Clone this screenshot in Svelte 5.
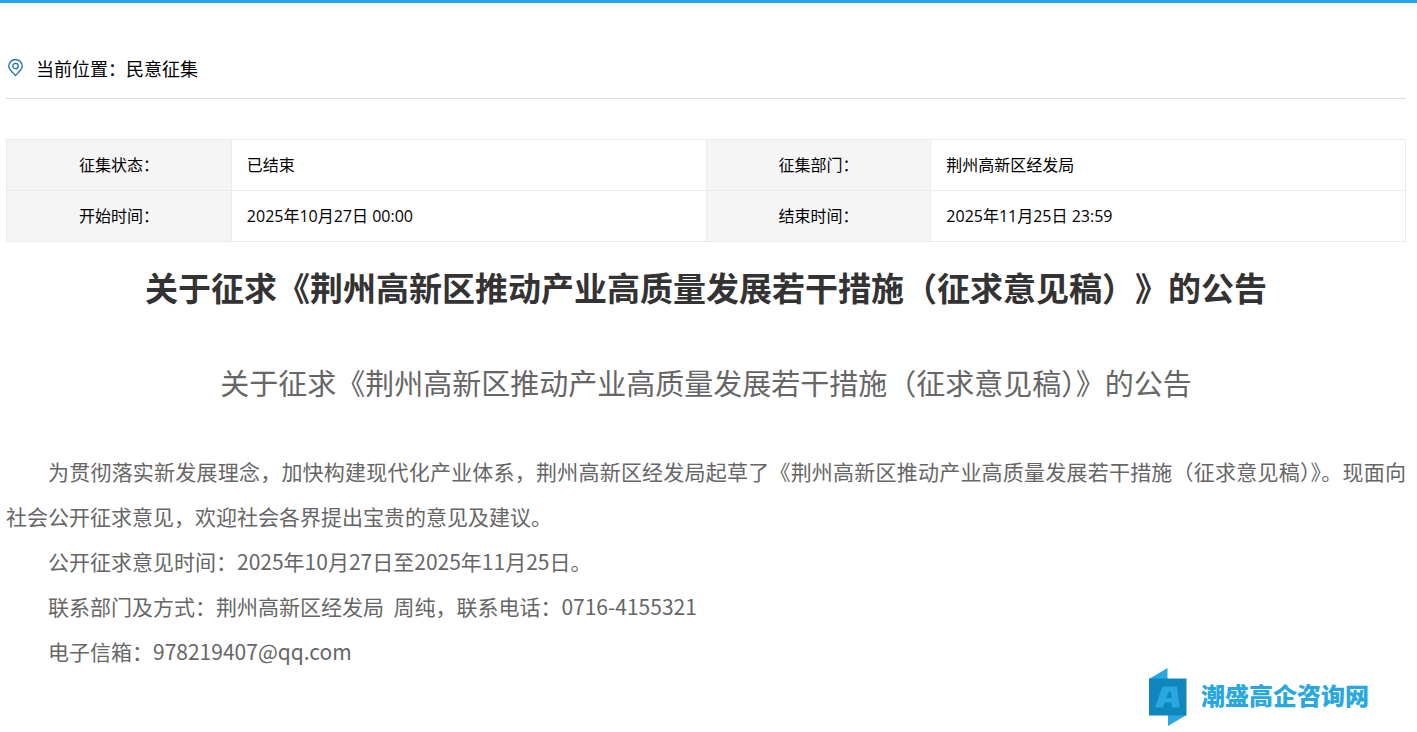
<script>
  const rows = [
    [
      { label: "征集状态：", value: "已结束" },
      { label: "征集部门：", value: "荆州高新区经发局" },
    ],
    [
      { label: "开始时间：", value: "2025年10月27日 00:00" },
      { label: "结束时间：", value: "2025年11月25日 23:59" },
    ],
  ];

  const title = "关于征求《荆州高新区推动产业高质量发展若干措施（征求意见稿）》的公告";

  const paragraphs = [
    "为贯彻落实新发展理念，加快构建现代化产业体系，荆州高新区经发局起草了《荆州高新区推动产业高质量发展若干措施（征求意见稿）》。现面向社会公开征求意见，欢迎社会各界提出宝贵的意见及建议。",
    "公开征求意见时间：2025年10月27日至2025年11月25日。",
    "联系部门及方式：荆州高新区经发局\u00a0\u00a0周纯，联系电话：0716-4155321",
    "电子信箱：978219407@qq.com",
  ];
</script>

<div class="page">
  <nav class="breadcrumb" aria-label="当前位置">
    <svg class="breadcrumb__icon" width="16" height="18" viewBox="0 0 16 18" fill="none" stroke="#1673ae" stroke-width="1.3">
      <path d="M7.500 16.500C6 14.400.7 11 .7 7a6.800 6.500 0 0 1 13.600 0c0 4-5.300 7.400-6.800 9.500z" />
      <circle cx="7.500" cy="7" r="2.700" />
    </svg>
    <span>当前位置：<a href="#list">民意征集</a></span>
  </nav>

  <table class="info">
    <tbody>
      {#each rows as row}
        <tr>
          {#each row as cell}
            <th scope="row">{cell.label}</th>
            <td>{cell.value}</td>
          {/each}
        </tr>
      {/each}
    </tbody>
  </table>

  <main>
    <h1>{title}</h1>
    <article>
      <h2>{title}</h2>
      {#each paragraphs as text}
        <p>{text}</p>
      {/each}
    </article>
  </main>

  <a class="logo" href="#home">
    <svg width="38" height="58" viewBox="0 0 38 58" aria-hidden="true">
      <path d="M0 11L18.500 0v11z" fill="#29a8e0" />
      <path d="M19 47h18.500L19 58z" fill="#29a8e0" />
      <path d="M0 10.500h37.500V47.500H0z" fill="#0f87bd" />
      <path fill-rule="evenodd" d="M13.500 18.500H28L30.500 39.500H23L22.500 34.500H15.500L13.500 39.500H6zM17 30h5.500L22 23.500h-2z" fill="#29a8e0" />
    </svg>
    <span>潮盛高企咨询网</span>
  </a>
</div>

<style>
  :global(body) {
    margin: 0;
    background: #fff;
  }

  .page {
    border-top: 3px solid #23a3f2;
    padding: 35px 11px 0 6px;
    font-family: "Noto Sans CJK SC", sans-serif;
    color: #000;
  }

  .breadcrumb {
    display: flex;
    align-items: center;
    gap: 12px;
    height: 60px;
    border-bottom: 1px solid #ddd;
    font-size: 18px;
  }

  .breadcrumb__icon {
    margin-left: 2px;
  }

  .breadcrumb a {
    color: inherit;
    text-decoration: none;
  }

  .info {
    width: 100%;
    margin-top: 40px;
    table-layout: fixed;
    border-collapse: collapse;
    font-family: "Open Sans", "Noto Sans CJK SC", sans-serif;
    font-size: 16px;
    line-height: 24px;
  }

  .info th,
  .info td {
    padding: 13px 15px;
    border: 1px solid #ebebeb;
  }

  .info th {
    width: 16%;
    padding: 13px 0;
    background: #f5f5f5;
    font-weight: 400;
    text-align: center;
  }

  h1 {
    margin: 20px 0 0;
    color: #333;
    font-size: 33px;
    font-weight: 700;
    line-height: 50px;
    text-align: center;
    text-spacing-trim: space-all;
  }

  article {
    margin-top: 48px;
    color: #666;
    font-size: 21px;
    line-height: 45px;
  }

  h2 {
    margin: 0 0 44px;
    font-size: 29px;
    font-weight: 400;
    line-height: 45px;
    text-align: center;
  }

  p {
    margin: 0;
    text-align: justify;
    text-indent: 2em;
  }

  .logo {
    display: flex;
    align-items: center;
    justify-content: flex-end;
    gap: 14px;
    margin: -6px 37px 0 0;
    color: #29a8e0;
    font-size: 24px;
    font-weight: 900;
    line-height: 36px;
    text-decoration: none;
  }

  .logo span {
    padding-bottom: 4px;
  }
</style>
